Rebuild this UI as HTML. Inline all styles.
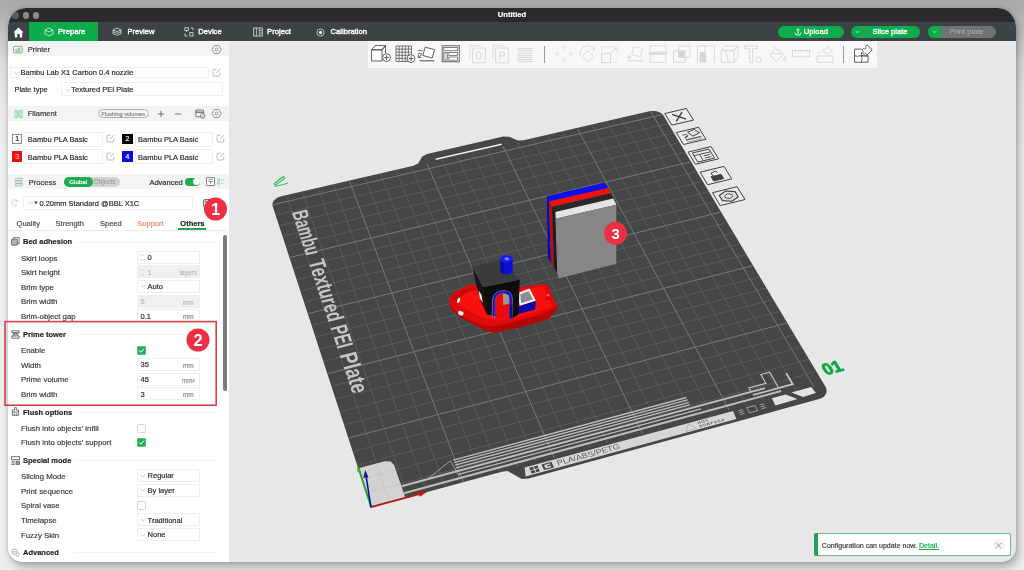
<!DOCTYPE html>
<html><head><meta charset="utf-8"><title>Untitled</title>
<style>
html,body{margin:0;padding:0;}
body{width:1024px;height:570px;overflow:hidden;position:relative;font-family:"Liberation Sans",sans-serif;
background:linear-gradient(180deg,#a6a9a6 0px,#abadab 10px,#c2c3c2 32px,#dcdcdc 62px,#e9e9e9 100px,#eeeeee 150px,#eeeeee 570px);}
#win{position:absolute;left:8px;top:8px;width:1007.5px;height:553.5px;border-radius:18px 18px 15px 15px / 20px 20px 15px 15px;overflow:hidden;background:#e7e7e7;will-change:transform;
}
#shadow{position:absolute;left:8px;top:8px;width:1007.5px;height:553.5px;border-radius:18px 18px 15px 15px / 20px 20px 15px 15px;box-shadow:3px 6px 10px 0px rgba(0,0,0,0.26),0 0 4px rgba(0,0,0,0.18);}
#in{position:absolute;left:-8px;top:-8px;width:1024px;height:570px;}
.t{position:absolute;white-space:nowrap;line-height:10px;height:10px;-webkit-text-stroke:0.18px currentColor;}
.b{position:absolute;box-sizing:border-box;}
.i{position:absolute;overflow:visible;}
</style></head><body>
<div id="shadow"></div>
<div id="win"><div id="in">
<svg class="i" style="left:0;top:0" width="1024" height="570" viewBox="0 0 1024 570"><polygon points="370.9,507.3 501.8,471.8 507.6,471.1 521.9,479.0 528.7,478.4 819.1,399.0 822.0,397.9 824.3,396.2 825.9,394.1 826.6,391.7 826.5,389.3 825.5,386.8 663.3,115.3 661.9,113.7 660.0,112.4 657.6,111.5 654.9,110.9 652.0,110.9 649.3,111.2 523.6,140.3 517.9,140.6 509.3,136.7 503.4,136.5 427.1,154.1 422.2,156.5 418.4,163.3 413.5,165.7 281.4,196.2 278.6,197.1 276.2,198.5 274.2,200.1 273.0,202.0 272.4,204.0 272.6,205.9" fill="#444746"/>
<path d="M389.6 502.2 L286.5 196.1 M367.2 492.8 L815.6 371.9 M408.2 497.2 L302.4 192.5 M362.6 478.8 L808.2 359.5 M426.7 492.1 L318.2 188.8 M358.1 465.0 L800.8 347.2 M445.2 487.1 L333.9 185.2 M353.6 451.3 L793.6 335.1 M481.8 477.2 L365.2 178.0 M344.9 424.7 L779.4 311.5 M500.0 472.3 L380.7 174.4 M340.7 411.6 L772.5 299.8 M518.1 467.3 L396.2 170.8 M336.5 398.7 L765.6 288.4 M536.1 462.5 L411.6 167.2 M332.3 386.1 L758.8 277.1 M571.9 452.7 L442.3 160.1 M324.2 361.2 L745.6 254.9 M589.7 447.9 L457.6 156.6 M320.2 349.0 L739.1 244.1 M607.4 443.1 L472.8 153.1 M316.3 337.0 L732.6 233.3 M625.0 438.3 L487.9 149.6 M312.4 325.2 L726.3 222.8 M660.1 428.8 L518.0 142.6 M304.9 302.0 L713.9 202.0 M677.5 424.1 L533.0 139.2 M301.1 290.6 L707.8 191.8 M694.8 419.4 L547.9 135.7 M297.5 279.4 L701.7 181.7 M712.0 414.7 L562.8 132.3 M293.9 268.3 L695.8 171.8 M746.3 405.4 L592.4 125.4 M286.8 246.5 L684.1 152.3 M763.3 400.8 L607.1 122.0 M283.3 235.9 L678.4 142.7 M780.3 396.2 L621.7 118.7 M279.8 225.4 L672.7 133.2 M797.2 391.6 L636.3 115.3 M276.4 215.0 L667.1 123.9" stroke="#5d6060" stroke-width="0.8" fill="none"/>
<path d="M463.5 482.2 L349.6 181.6 M349.3 437.9 L786.5 323.2 M554.1 457.6 L427.0 163.7 M328.2 373.5 L752.2 265.9 M642.6 433.5 L503.0 146.1 M308.6 313.5 L720.0 212.3 M729.2 410.0 L577.6 128.9 M290.3 257.3 L689.9 162.0 M814.0 387.0 L650.8 111.9 M273.1 204.7 L661.6 114.7" stroke="#767979" stroke-width="1.0" fill="none"/>
<polygon points="371.7,506.1 405.1,497.1 394.1,465.1 390.8,461.5 384.7,461.2 359.3,467.9" fill="#d2d2d2" />
<path d="M389.3 501.4 L376.5 463.3 M367.4 492.8 L400.5 483.8 M362.8 478.7 L395.7 469.9" stroke="#bdbdbd" stroke-width="0.5" fill="none"/>
<path d="M403.8 493.3 L781.2 391.0" stroke="#bcbcbc" stroke-width="2.00" fill="none"/>
<path d="M401.4 486.2 L765.0 388.1" stroke="#bcbcbc" stroke-width="2.00" fill="none"/>
<path d="M458.6 474.4 L701.1 408.9" stroke="#bcbcbc" stroke-width="1.40" fill="none"/>
<path d="M456.1 467.8 L690.1 404.7" stroke="#bcbcbc" stroke-width="1.35" fill="none"/>
<path d="M455.1 465.2 L688.9 402.3" stroke="#bcbcbc" stroke-width="1.35" fill="none"/>
<path d="M454.1 462.6 L687.6 399.8" stroke="#bcbcbc" stroke-width="1.35" fill="none"/>
<path d="M453.2 460.1 L686.4 397.5" stroke="#bcbcbc" stroke-width="1.35" fill="none"/>
<path d="M428.0 478.7 L450.4 460.7 L459.3 476.4" stroke="#c4c4c4" stroke-width="0.7" fill="none" stroke-linejoin="miter"/>
<path d="M751.2 391.9 L748.9 387.9 L765.9 383.3 L760.9 374.5 L769.6 372.1 L778.4 387.5" stroke="#c4c4c4" stroke-width="1.2" fill="none" stroke-linejoin="miter"/>
<path d="M786.2 373.2 L792.7 384.2 L752.9 395.0" stroke="#c4c4c4" stroke-width="1.8" fill="none" stroke-linejoin="miter"/>
<polygon points="524.6,467.6 733.0,410.9 736.4,418.9 525.6,476.4" fill="#d6d6d6" />
<polygon points="529.3,467.7 537.4,465.5 539.8,471.3 531.7,473.5" fill="#3f4242" />
<polygon points="532.9,466.7 534.0,466.4 536.4,472.2 535.3,472.5" fill="#d6d6d6" />
<polygon points="530.3,470.2 538.4,468.0 538.8,468.8 530.7,471.0" fill="#d6d6d6" />
<polygon points="541.5,464.4 551.4,461.7 553.9,467.4 544.0,470.1" fill="#3f4242" />
<polygon points="544.0,464.9 549.9,463.3 551.4,466.9 545.5,468.5" fill="#d6d6d6" />
<polygon points="547.0,465.3 550.4,464.4 550.9,465.5 547.4,466.4" fill="#3f4242" />
<text transform="matrix(1.7972 -0.4899 0.5959 1.3775 558.10 465.53)" font-family="Liberation Sans, sans-serif" font-weight="normal" font-size="5.0" fill="#5c5f5f" letter-spacing="0" textLength="34.8" lengthAdjust="spacingAndGlyphs">PLA/ABS/PETG</text>
<path d="M686.1 431.3 L688.5 423.9 L696.8 428.3 L686.1 431.3" stroke="#8a8a8a" stroke-width="0.4" fill="none" stroke-linejoin="miter"/>
<text transform="matrix(1.7319 -0.4714 0.6849 1.3215 698.26 424.15)" font-family="Liberation Sans, sans-serif" font-weight="bold" font-size="2.4" fill="#55585a" letter-spacing="0.5">HOT</text>
<text transform="matrix(1.7347 -0.4730 0.6873 1.3263 699.97 427.46)" font-family="Liberation Sans, sans-serif" font-weight="bold" font-size="2.4" fill="#55585a" letter-spacing="0.5">SURFACE</text>
<path d="M746.6 407.7 L754.8 405.5 L757.7 410.7 L749.5 412.9 L746.6 407.7" stroke="#c4c4c4" stroke-width="0.7" fill="none" stroke-linejoin="miter"/>
<path d="M738.1 410.9 L742.6 409.7" stroke="#c4c4c4" stroke-width="0.70" fill="none"/>
<path d="M739.1 412.7 L743.6 411.5" stroke="#c4c4c4" stroke-width="0.70" fill="none"/>
<path d="M740.1 414.6 L744.6 413.3" stroke="#c4c4c4" stroke-width="0.70" fill="none"/>
<path d="M759.6 405.0 L764.1 403.8" stroke="#c4c4c4" stroke-width="0.70" fill="none"/>
<path d="M760.7 406.9 L765.1 405.7" stroke="#c4c4c4" stroke-width="0.70" fill="none"/>
<path d="M761.7 408.7 L766.1 407.5" stroke="#c4c4c4" stroke-width="0.70" fill="none"/>
<polygon points="771.8,398.2 785.5,394.4 797.5,398.9 775.4,405.5" fill="#e2e2e2" />
<polygon points="791.4,392.4 811.2,387.0 815.9,393.0 803.0,397.0" fill="#e2e2e2" />
<path d="M435.7 159.2 L501.7 144.2" stroke="#ececec" stroke-width="1.50" fill="none"/>
<text transform="matrix(0.3555 1.0567 -1.6223 0.3830 291.64 212.32)" font-family="Liberation Sans, sans-serif" font-weight="bold" font-size="13.3" textLength="41.5" lengthAdjust="spacingAndGlyphs" fill="#c6c6c6">Bambu</text>
<text transform="matrix(0.3808 1.1317 -1.6749 0.4080 308.20 261.53)" font-family="Liberation Sans, sans-serif" font-weight="bold" font-size="13.3" textLength="54.2" lengthAdjust="spacingAndGlyphs" fill="#c6c6c6">Textured</text>
<text transform="matrix(0.4018 1.1941 -1.7172 0.4288 330.31 327.26)" font-family="Liberation Sans, sans-serif" font-weight="bold" font-size="13.3" textLength="18.5" lengthAdjust="spacingAndGlyphs" fill="#c6c6c6">PEI</text>
<text transform="matrix(0.4185 1.2438 -1.7500 0.4454 339.59 354.82)" font-family="Liberation Sans, sans-serif" font-weight="bold" font-size="13.3" textLength="32.0" lengthAdjust="spacingAndGlyphs" fill="#c6c6c6">Plate</text>
<polygon points="664.8,113.5 686.4,108.5 693.5,120.1 671.8,125.1" fill="#ebebeb" stroke="#3e4141" stroke-width="1" stroke-linejoin="round"/>
<path d="M672.1 114.4 L686.2 119.1" stroke="#3e4141" stroke-width="1.40" fill="none"/>
<path d="M682.0 112.1 L676.3 121.4" stroke="#3e4141" stroke-width="1.40" fill="none"/>
<polygon points="676.3,132.6 698.6,127.3 705.9,139.2 683.5,144.5" fill="#ebebeb" stroke="#3e4141" stroke-width="1" stroke-linejoin="round"/>
<polygon points="687.6,132.3 694.3,129.4 699.4,132.8 692.8,136.1" fill="#ebebeb" stroke="#3e4141" stroke-width="1.0" stroke-linejoin="round"/>
<path d="M685.9 140.1 L701.2 136.5" stroke="#6a6d6d" stroke-width="1.50" fill="none"/>
<path d="M687.2 142.2 L702.5 138.6" stroke="#8a8d8d" stroke-width="0.80" fill="none"/>
<path d="M682.0 135.3 L686.9 134.1" stroke="#3e4141" stroke-width="0.80" fill="none"/>
<path d="M684.8 138.2 L688.1 135.2" stroke="#3e4141" stroke-width="1.20" fill="none"/>
<polygon points="688.1,152.1 711.1,146.6 718.6,158.8 695.4,164.3" fill="#ebebeb" stroke="#3e4141" stroke-width="1" stroke-linejoin="round"/>
<polygon points="692.3,153.0 708.9,149.1 714.5,158.1 697.8,162.1" fill="none" stroke="#3e4141" stroke-width="1.0" stroke-linejoin="round"/>
<path d="M693.9 155.7 L710.6 151.8" stroke="#3e4141" stroke-width="0.90" fill="none"/>
<path d="M699.5 154.4 L703.4 160.8" stroke="#3e4141" stroke-width="0.90" fill="none"/>
<path d="M703.6 155.9 L710.1 154.4" stroke="#3e4141" stroke-width="0.90" fill="none"/>
<path d="M704.9 158.1 L711.4 156.6" stroke="#3e4141" stroke-width="0.90" fill="none"/>
<polygon points="700.1,172.2 724.0,166.4 731.7,178.9 707.7,184.7" fill="#ebebeb" stroke="#3e4141" stroke-width="1" stroke-linejoin="round"/>
<polygon points="711.1,176.7 721.1,174.3 723.8,178.6 713.7,181.1" fill="#3e4141" stroke="#3e4141" stroke-width="0.9" stroke-linejoin="round"/>
<path d="M713.0 176.2 L711.0 173.0 L715.8 171.0 L717.4 172.6" stroke="#3e4141" stroke-width="1.0" fill="none" stroke-linejoin="miter"/>
<polygon points="712.5,192.7 737.1,186.7 745.0,199.5 720.2,205.6" fill="#ebebeb" stroke="#3e4141" stroke-width="1" stroke-linejoin="round"/>
<polygon points="725.6,191.0 735.1,191.6 738.2,196.8 731.9,201.3 722.4,200.6 719.3,195.5" fill="#dcdcdc" stroke="#3e4141" stroke-width="1.1" stroke-linejoin="round"/>
<polygon points="727.4,193.9 731.6,194.3 732.8,196.3 730.1,198.3 725.9,198.0 724.6,195.9" fill="#ebebeb" stroke="#3e4141" stroke-width="0.9" stroke-linejoin="round"/>
<path d="M370.9 507.3 L420.2 493.9" stroke="#c81212" stroke-width="1.6"/>
<polygon points="426.7,492.1 417.7,491.8 419.9,496.8" fill="#c81212" />
<path d="M370.9 507.3 L359.2 471.4" stroke="#22b52a" stroke-width="1.3"/>
<polygon points="357.3,464.3 357.5,472.4 361.0,471.2" fill="#22b52a" />
<path d="M370.9 507.3 L366.3 477.3" stroke="#13139a" stroke-width="1.6"/>
<polygon points="365.3,469.9 363.3,477.7 368.5,477.5" fill="#13139a" />
<polygon points="546.8,196.3 548.9,201.6 551.1,262.6 547.9,257.4" fill="#0a0ab8" />
<polygon points="548.9,201.6 552.1,206.8 554.2,267.9 551.1,262.6" fill="#b80d0d" />
<polygon points="552.1,206.8 555.3,212.1 557.4,273.2 554.2,267.9" fill="#1c1c1c" />
<polygon points="555.3,212.1 556.3,218.4 558.4,278.4 557.4,273.2" fill="#9a9a9a" />
<polygon points="546.8,196.3 604.7,182.6 607.9,187.9 548.9,201.6" fill="#0d0df0" />
<polygon points="548.9,201.6 607.9,187.9 611.1,193.2 552.1,206.8" fill="#f01010" />
<polygon points="552.1,206.8 611.1,193.2 613.2,198.4 555.3,212.1" fill="#2a2a2a" />
<polygon points="555.3,212.1 613.2,198.4 616.3,204.7 556.3,218.4" fill="#e4e4e4" />
<polygon points="556.3,218.4 616.3,204.7 616.3,263.7 558.4,278.4" fill="#868686" />
<path d="M449.2 300 C450.5 295 454 292.5 458.7 289.8 C463 287.3 467.5 285.6 472 284.6 L518.4 287.2 L544.6 284 Q547.2 284 548.4 286.8 L557.1 305.8 Q557.8 308 555.9 310.2 L549.1 318.5 C538 322.6 524 326.4 512.3 329 L500 331.6 Q495.5 333.2 491 332.2 C487 331.2 484 329.8 480.8 328 C472 323.6 463.5 319.6 457.3 314.8 C452.5 311 448.4 305.4 449.2 300Z" fill="#e00a0a" />
<path d="M449.6 303 C454 311 462 316.6 470 320.2 C478 323.8 486 326.4 493 326 C505 325 530 318 549 311 L557.4 306.6 Q557.8 308.4 555.9 310.2 L549.1 318.5 C538 322.6 524 326.4 512.3 329 L500 331.6 Q495.5 333.2 491 332.2 C487 331.2 484 329.8 480.8 328 C472 323.6 463.5 319.6 457.3 314.8 C453 311.4 449.4 307 449.6 303Z" fill="#b60707" />
<path d="M456.5 298.5 C460 293 466 289.6 474 288.2 L518.4 289.6 L543.2 286.6 L547.6 296.6 L551.6 306.6 C540 311.6 516 318.4 497 320.2 C486 319.8 462 311 456.5 298.5Z" fill="#fb1010" />
<path d="M451.6 298.8 C455 293.6 463 288.8 473.6 286.4 L476.4 289.6 C468 291.4 460.6 295.6 457.2 301.2Z" fill="#c60a0a" />
<ellipse cx="460.8" cy="313.2" rx="3.2" ry="2.4" fill="#f4f4f4" stroke="#a40000" stroke-width="0.5" transform="rotate(25 460.8 313.2)"/>
<ellipse cx="458.6" cy="300.4" rx="1.4" ry="2.7" fill="#f4f4f4" transform="rotate(20 458.6 300.4)"/>
<polygon points="517.9,292.9 529.5,288.4 535.9,300.7 519.7,306.0" fill="#f6f6f6" />
<polygon points="520.3,294.2 528.6,291.0 532.9,299.5 521.1,303.3" fill="#8c8c8c" />
<polygon points="518.4,306.0 519.7,306.0 535.9,300.7 535.1,309.6 518.4,314.0" fill="#0a0aa6" />
<polygon points="545.0,294.6 549.4,294.1 549.4,299.5 545.2,300.2" fill="#d60909" />
<ellipse cx="547.4" cy="295" rx="2.2" ry="1.6" fill="#ff2a2a"/>
<ellipse cx="548.4" cy="295.2" rx="0.9" ry="0.8" fill="#ff9a9a"/>
<polygon points="472.3,266.7 483.0,287.2 486.8,314.5 481.0,301.5 476.5,286.0" fill="#151515" />
<polygon points="478.6,290.5 481.6,295.0 482.6,303.0 479.8,298.0" fill="#ececec" />
<polygon points="483.0,287.2 519.7,279.6 518.6,314.5 512.0,318.2 486.8,314.5" fill="#0d0d0d" />
<path d="M492.1 316.4 L492.6 300.3 C492.9 292.4 500.0 290.0 505.6 290.8 C511.1 291.6 512.4 295.6 512.4 300.3 L512.0 318.0 L509.5 318.9 L509.5 299.5 C509.2 295.2 506.4 293.2 502.4 293.2 C496.9 293.7 495.3 297.1 495.3 301.9 L495.0 317.7Z" fill="#1010c8" stroke="#e8e8f8" stroke-width="0.4"/>
<path d="M495.3 317.7 L495.3 301.9 C495.3 297.1 496.9 293.7 502.4 293.2 C506.4 293.2 509.2 295.2 509.5 299.5 L509.5 318.9Z" fill="#e80c0c" />
<polygon points="502.9,293.2 508.9,295.2 508.9,303.8 503.2,305.0" fill="#9a9a9a" />
<polygon points="509.5,305.0 512.4,303.8 512.0,318.0 509.5,318.9" fill="#0b0ba0" />
<polygon points="472.3,266.7 500.5,260.3 519.7,279.6 483.0,287.2" fill="#3a3b3b" />
<path d="M500.4 259 V272.6 Q506.5 276.6 512.7 272.6 V259 Z" fill="#0e0ed2"/>
<path d="M500.4 259 V272.6 Q502 273.8 503.6 274.2 V261 Z" fill="#0a0aa2"/>
<ellipse cx="506.5" cy="258.9" rx="6.2" ry="3.9" fill="#1c1cf2"/>
<ellipse cx="506.9" cy="258.8" rx="2.2" ry="1.5" fill="#8c8cdc"/>
<circle cx="615.5" cy="233.3" r="11.5" fill="#ef2f43"/><text x="615.5" y="238.63" text-anchor="middle" font-family="Liberation Sans, sans-serif" font-weight="bold" font-size="14.8" fill="#fff">3</text>
<text transform="matrix(1.427 -0.385 0.758 1.251 826.0 375.2)" font-family="Liberation Sans, sans-serif" font-weight="bold" font-size="11.8" fill="#10a84a" stroke="#10a84a" stroke-width="0.6">01</text>
<g><path d="M274.6 183.4 L282.2 177.2 Q283.6 176.2 284.3 177.3 Q284.9 178.4 283.6 179.4 L276 184.6 Q274 185.2 274.6 183.4 Z" fill="#c8f0d8" stroke="#18b85c" stroke-width="1.1"/><path d="M274.2 186.4 Q281 185.6 288.2 183" fill="none" stroke="#18b85c" stroke-width="0.9"/></g></svg>
<div class="b" style="left:368px;top:41.3px;width:508.6px;height:26.6px;background:#f8f8f8"></div>
<svg class="i" style="left:370.0px;top:44.4px" width="22" height="20" viewBox="0 0 22 20"><path d="M1.5 5.8 L5 1.6 H15.5 L12 5.8 Z M1.5 5.8 H12 V17 H1.5 Z M12 5.8 L15.5 1.6 V9" fill="#fff" stroke="#505050" stroke-width="0.9" stroke-linejoin="round"/><circle cx="16.6" cy="13.6" r="3.9" fill="#fff" stroke="#505050" stroke-width="0.9"/><path d="M16.6 11.2 V16 M14.2 13.6 H19" stroke="#505050" stroke-width="0.9"/></svg>
<svg class="i" style="left:393.5px;top:44.4px" width="22" height="20" viewBox="0 0 22 20"><path d="M2.0 2 V17.5 M2 2.0 H17.5 M5.1 2 V17.5 M2 5.1 H17.5 M8.2 2 V17.5 M2 8.2 H17.5 M11.3 2 V17.5 M2 11.3 H17.5 M14.4 2 V17.5 M2 14.4 H17.5 M17.5 2 V17.5 M2 17.5 H17.5 " stroke="#505050" stroke-width="0.75" fill="none"/><circle cx="17" cy="14.6" r="3.9" fill="#fff" stroke="#505050" stroke-width="0.9"/><path d="M17 12.2 V17 M14.6 14.6 H19.4" stroke="#505050" stroke-width="0.9"/></svg>
<svg class="i" style="left:416.0px;top:44.4px" width="22" height="20" viewBox="0 0 22 20"><path d="M9.2 3.2 L18.6 5.6 L16.2 14 L6.8 11.4 Z" fill="#fff" stroke="#505050" stroke-width="0.9" stroke-linejoin="round"/><path d="M2 6.6 H6.4 M2 9.4 H5.6 M2.4 13.4 L6 10.2 M2.4 13.4 V10.6 M2.4 13.4 H5.2" stroke="#505050" stroke-width="0.8" fill="none"/><path d="M3.6 16.8 H18.4" stroke="#7a7a7a" stroke-width="1.4"/></svg>
<svg class="i" style="left:439.5px;top:44.4px" width="22" height="20" viewBox="0 0 22 20"><rect x="2.2" y="1.8" width="17" height="16" fill="#fff" stroke="#505050" stroke-width="0.9"/><rect x="3.8" y="3.4" width="13.8" height="3.4" fill="none" stroke="#505050" stroke-width="0.7"/><rect x="3.8" y="8.4" width="3.4" height="7.8" fill="#ddd" stroke="#505050" stroke-width="0.7"/><rect x="8.8" y="8.4" width="8.8" height="3" fill="none" stroke="#505050" stroke-width="0.7"/><rect x="8.8" y="13" width="8.8" height="3.2" fill="none" stroke="#505050" stroke-width="0.7"/></svg>
<svg class="i" style="left:467.0px;top:44.4px" width="22" height="20" viewBox="0 0 22 20"><path d="M3 15 V1.6 H13 M5.6 4 H18.4 V18.8 H5.6 Z" fill="none" stroke="#d6d6d6" stroke-width="0.9"/><rect x="9.4" y="8" width="4.6" height="7" rx="1.6" fill="none" stroke="#d6d6d6" stroke-width="1"/></svg>
<svg class="i" style="left:489.8px;top:44.4px" width="22" height="20" viewBox="0 0 22 20"><path d="M3 15 V1.6 H13 M5.6 4 H18.4 V18.8 H5.6 Z" fill="none" stroke="#d6d6d6" stroke-width="0.9"/><path d="M9.8 15.4 V8 H12.6 Q14.6 8 14.6 10 Q14.6 12 12.6 12 H9.8" fill="none" stroke="#d6d6d6" stroke-width="1"/></svg>
<svg class="i" style="left:513.5px;top:44.4px" width="22" height="20" viewBox="0 0 22 20"><path d="M3.5 4.6 H18.5 M3.5 6.8 H18.5 M3.5 9.0 H18.5 M3.5 11.2 H18.5 M3.5 13.4 H18.5 M3.5 15.6 H18.5 M3.5 17.8 H18.5 " stroke="#d6d6d6" stroke-width="1.1"/></svg>
<div class="b" style="left:544.3px;top:46px;width:0.9px;height:16.6px;background:#9c9c9c"></div>
<svg class="i" style="left:552.5px;top:44.4px" width="22" height="20" viewBox="0 0 22 20"><path d="M11 1.6 L13 4 H9 Z M11 18 L13 15.6 H9 Z M2 9.8 L4.4 7.8 V11.8 Z M20 9.8 L17.6 7.8 V11.8 Z M11 4 V7 M11 12.6 V15.6 M4.4 9.8 H7.4 M14.6 9.8 H17.6" fill="none" stroke="#d6d6d6" stroke-width="0.8" stroke-dasharray="1.2 0.8"/></svg>
<svg class="i" style="left:576.7px;top:44.4px" width="22" height="20" viewBox="0 0 22 20"><path d="M3.4 12 A7.6 7.6 0 0 1 17 5.4 M17.4 2.6 V5.8 H14.2" fill="none" stroke="#d6d6d6" stroke-width="0.9"/><path d="M10.6 6.6 L16.4 12.4 L10.6 18.2 L4.8 12.4 Z" fill="none" stroke="#d6d6d6" stroke-width="0.9"/></svg>
<svg class="i" style="left:599.0px;top:44.4px" width="22" height="20" viewBox="0 0 22 20"><rect x="2.6" y="2.6" width="16" height="16" fill="none" stroke="#d6d6d6" stroke-width="0.7" stroke-dasharray="1.2 0.9"/><rect x="2.6" y="9.6" width="9" height="9" fill="none" stroke="#d6d6d6" stroke-width="0.9"/><path d="M12.6 8.6 L17 4.2 M14.4 4 H17.2 V6.8" fill="none" stroke="#d6d6d6" stroke-width="0.9"/></svg>
<svg class="i" style="left:624.5px;top:44.4px" width="22" height="20" viewBox="0 0 22 20"><path d="M8.6 2.6 L17.4 4.4 L15.6 12.6 L6.8 10.6 Z" fill="none" stroke="#d6d6d6" stroke-width="0.9"/><path d="M3.2 11.4 L6 13.6 L3.6 15 Z M3.4 16.8 H18.2" fill="none" stroke="#d6d6d6" stroke-width="1"/></svg>
<svg class="i" style="left:647.0px;top:44.4px" width="22" height="20" viewBox="0 0 22 20"><rect x="3" y="1.8" width="16" height="6.4" fill="none" stroke="#d6d6d6" stroke-width="0.9"/><rect x="3" y="10.4" width="16" height="8" fill="none" stroke="#d6d6d6" stroke-width="0.9"/><path d="M1.6 9.3 H20.4" stroke="#d6d6d6" stroke-width="0.9"/></svg>
<svg class="i" style="left:671.0px;top:44.4px" width="22" height="20" viewBox="0 0 22 20"><rect x="7.6" y="2" width="11.4" height="11.4" fill="none" stroke="#d6d6d6" stroke-width="0.9"/><rect x="2.6" y="6.8" width="11.4" height="11.4" fill="none" stroke="#d6d6d6" stroke-width="0.9"/><rect x="7.6" y="6.8" width="6.4" height="6.6" fill="#d6d6d6"/></svg>
<svg class="i" style="left:694.5px;top:44.4px" width="22" height="20" viewBox="0 0 22 20"><path d="M2.4 1.8 H19.4 V18.4 M2.4 1.8 V18.4 M10 1.8 V8" fill="none" stroke="#d6d6d6" stroke-width="0.9"/><rect x="4.6" y="8" width="6.4" height="10.4" fill="#d6d6d6"/></svg>
<svg class="i" style="left:718.5px;top:44.4px" width="22" height="20" viewBox="0 0 22 20"><path d="M2.4 6.4 L6.4 2 H19 L15 6.4 Z M2.4 6.4 H15 V18.4 H2.4 Z M15 6.4 L19 2 V14 L15 18.4 M6.4 6.4 L9.6 18.4" fill="none" stroke="#d6d6d6" stroke-width="0.9" stroke-linejoin="round"/></svg>
<svg class="i" style="left:742.0px;top:44.4px" width="22" height="20" viewBox="0 0 22 20"><path d="M2.6 2 H15.6 V4.6 H10.6 V18.4 H7.6 V4.6 H2.6 Z" fill="none" stroke="#d6d6d6" stroke-width="0.9"/><rect x="14.4" y="13.2" width="4.4" height="5.2" rx="0.8" fill="none" stroke="#d6d6d6" stroke-width="0.8"/></svg>
<svg class="i" style="left:766.8px;top:44.4px" width="22" height="20" viewBox="0 0 22 20"><path d="M6.2 2 L10.8 6.6 M8.6 4.4 L2.6 10.6 L9.4 17.6 L16.4 10.6 L10.8 5 M3.6 9.6 H15.4" fill="none" stroke="#d6d6d6" stroke-width="0.9"/><path d="M17.6 12.4 Q20.2 16 17.6 17.8 Q15 16 17.6 12.4 Z" fill="none" stroke="#d6d6d6" stroke-width="0.8"/></svg>
<svg class="i" style="left:789.7px;top:44.4px" width="22" height="20" viewBox="0 0 22 20"><rect x="2.4" y="6.4" width="17.2" height="6.4" fill="none" stroke="#d6d6d6" stroke-width="0.9"/><path d="M5.4 6.4 V9 M8.4 6.4 V8.2 M11.4 6.4 V9 M14.4 6.4 V8.2 M17 6.4 V9" stroke="#d6d6d6" stroke-width="0.8"/></svg>
<svg class="i" style="left:814.2px;top:44.4px" width="22" height="20" viewBox="0 0 22 20"><rect x="3" y="12" width="16" height="6.4" fill="none" stroke="#d6d6d6" stroke-width="0.9"/><path d="M8.4 6.6 L13.4 3 L18.4 6.8 L13.6 10.2 Z M3 9.8 L5.2 7.2 L7.4 9.8" fill="none" stroke="#d6d6d6" stroke-width="0.9"/></svg>
<div class="b" style="left:843.3px;top:46px;width:0.9px;height:16.6px;background:#9c9c9c"></div>
<svg class="i" style="left:851.7px;top:44.4px" width="22" height="20" viewBox="0 0 22 20"><path d="M9.6 5.1 H2.5 V18.2 H16.1 V11.9 H9.6" fill="#fff" stroke="#505050" stroke-width="0.9" stroke-linejoin="round"/><path d="M2.5 11.9 H4.2 Q5.4 13.6 6.8 11.9 H16.1 M9.6 8 V13.6 Q11.2 14.8 9.6 16.2 V18.2" fill="none" stroke="#505050" stroke-width="0.9"/><path d="M15.1 0.9 L20.2 5.9 L15.1 10.9 L13.4 9.3 Q12.2 10.6 11 9.6 Q10 8.4 11.4 7.4 L10 5.9 L11.6 4.4 Q12.6 5.6 13.8 4.6 Q14.6 3.6 13.6 2.4 Z" fill="#fff" stroke="#505050" stroke-width="0.9" stroke-linejoin="round"/></svg>
<div class="b" style="left:8px;top:41px;width:220.5px;height:521px;background:#fff"></div>
<div class="b" style="left:8px;top:41px;width:220.5px;height:15.4px;background:#f4f4f4"></div>
<svg class="i" style="left:12.5px;top:44.5px" width="10" height="9" viewBox="0 0 10 9"><rect x="0.6" y="1.3" width="8.6" height="6.6" rx="1" fill="none" stroke="#8d9a92" stroke-width="0.9"/><path d="M2.6 6.5 V4.5 H5 V3 H7.2 V6.5 Z" fill="#9fd9b4" stroke="#6bbf8b" stroke-width="0.5"/></svg>
<div class="t" style="left:27.7px;top:45.20px;font-size:7.6px;color:#333;font-weight:normal;">Printer</div>
<svg class="i" style="left:211.0px;top:43.9px" width="11" height="11" viewBox="0 0 11 11"><path d="M0.9 5.5 L3.2 1.5 H7.8 L10.1 5.5 L7.8 9.5 H3.2 Z" fill="none" stroke="#858585" stroke-width="0.8" stroke-linejoin="round"/><circle cx="5.5" cy="5.5" r="1.5" fill="none" stroke="#858585" stroke-width="0.8"/></svg>
<div class="b" style="left:9.5px;top:66.5px;width:199.5px;height:11.5px;border:0.6px solid #efefef;background:#fff"></div>
<svg class="i" style="left:13px;top:70.5px" width="6" height="4" viewBox="0 0 6 4"><path d="M0.5 0.7 L3 3.2 L5.5 0.7" fill="none" stroke="#c4c4c4" stroke-width="0.8"/></svg>
<div class="t" style="left:20.6px;top:68.20px;font-size:7.5px;color:#2a2a2a;font-weight:normal;">Bambu Lab X1 Carbon 0.4 nozzle</div>
<svg class="i" style="left:211.5px;top:67.8px" width="9" height="9" viewBox="0 0 9 9"><path d="M4.6 1.2 H2 Q1 1.2 1 2.2 V7 Q1 8 2 8 H6.8 Q7.8 8 7.8 7 V4.6" fill="none" stroke="#b4b4b4" stroke-width="0.9"/><path d="M4.4 4.8 L8 1.1" stroke="#b4b4b4" stroke-width="1"/></svg>
<div class="t" style="left:14.4px;top:85.20px;font-size:7.5px;color:#2a2a2a;font-weight:normal;">Plate type</div>
<div class="b" style="left:60.5px;top:81.8px;width:162px;height:14.4px;border:0.6px solid #efefef;background:#fff"></div>
<svg class="i" style="left:64.5px;top:87.6px" width="6" height="4" viewBox="0 0 6 4"><path d="M0.5 0.7 L3 3.2 L5.5 0.7" fill="none" stroke="#c4c4c4" stroke-width="0.8"/></svg>
<div class="t" style="left:71.3px;top:85.40px;font-size:7.5px;color:#2a2a2a;font-weight:normal;">Textured PEI Plate</div>
<div class="b" style="left:8px;top:105.6px;width:220.5px;height:15.2px;background:#f4f4f4"></div>
<svg class="i" style="left:13.5px;top:108.5px" width="9" height="10" viewBox="0 0 9 10"><path d="M0.8 1 H3 V9 H0.8 Z M6 1 H8.2 V9 H6 Z" fill="#cdeed9" stroke="#8ccfa6" stroke-width="0.7"/><path d="M3 2.2 H6 M3 7.8 H6" stroke="#8ccfa6" stroke-width="0.7"/><rect x="3.4" y="2.6" width="2.2" height="4.8" fill="#a5dcb9"/></svg>
<div class="t" style="left:27.7px;top:109.10px;font-size:7.6px;color:#333;font-weight:normal;">Filament</div>
<div class="b" style="left:97.5px;top:108.6px;width:51px;height:9.4px;border:0.7px solid #b0b0b0;border-radius:5px;background:#f4f4f4"></div>
<div class="t" style="left:101.5px;top:108.90px;font-size:5.6px;color:#8a8a8a;font-weight:normal;">Flushing volumes</div>
<svg class="i" style="left:157px;top:109.5px" width="8" height="8" viewBox="0 0 8 8"><path d="M4 0.8 V7.2 M0.8 4 H7.2" stroke="#555" stroke-width="0.8"/></svg>
<svg class="i" style="left:173.5px;top:109.5px" width="8" height="8" viewBox="0 0 8 8"><path d="M0.8 4 H7.2" stroke="#555" stroke-width="0.8"/></svg>
<svg class="i" style="left:194.5px;top:108.5px" width="11" height="10" viewBox="0 0 11 10"><rect x="0.8" y="1" width="7.8" height="6.8" rx="0.8" fill="none" stroke="#666" stroke-width="0.9"/><path d="M0.8 3.2 H8.6" stroke="#666" stroke-width="1.2"/><circle cx="7.6" cy="6.9" r="2.3" fill="#f4f4f4" stroke="#666" stroke-width="0.8"/><path d="M6.6 6.9 L7.4 7.7 L8.7 6.2" fill="none" stroke="#666" stroke-width="0.6"/></svg>
<svg class="i" style="left:211.0px;top:107.9px" width="11" height="11" viewBox="0 0 11 11"><path d="M0.9 5.5 L3.2 1.5 H7.8 L10.1 5.5 L7.8 9.5 H3.2 Z" fill="none" stroke="#858585" stroke-width="0.8" stroke-linejoin="round"/><circle cx="5.5" cy="5.5" r="1.5" fill="none" stroke="#858585" stroke-width="0.8"/></svg>
<div class="b" style="left:12.1px;top:133.5px;width:10.4px;height:10.4px;background:#fff;border:0.6px solid #909090;"></div><div class="t" style="left:12.1px;top:134.30px;font-size:6.9px;color:#222;font-weight:normal;width:10.4px;text-align:center;">1</div><div class="b" style="left:25px;top:131.6px;width:78px;height:15.2px;border:0.6px solid #efefef;background:#fff"></div><div class="t" style="left:27.8px;top:135.00px;font-size:7.5px;color:#2a2a2a;font-weight:normal;">Bambu PLA Basic</div><svg class="i" style="left:105.5px;top:134.39999999999998px" width="9" height="9" viewBox="0 0 9 9"><path d="M4.6 1.2 H2 Q1 1.2 1 2.2 V7 Q1 8 2 8 H6.8 Q7.8 8 7.8 7 V4.6" fill="none" stroke="#b4b4b4" stroke-width="0.9"/><path d="M4.4 4.8 L8 1.1" stroke="#b4b4b4" stroke-width="1"/></svg>
<div class="b" style="left:122.2px;top:133.5px;width:10.4px;height:10.4px;background:#000;"></div><div class="t" style="left:122.2px;top:134.30px;font-size:6.9px;color:#fff;font-weight:normal;width:10.4px;text-align:center;">2</div><div class="b" style="left:135.3px;top:131.6px;width:77.5px;height:15.2px;border:0.6px solid #efefef;background:#fff"></div><div class="t" style="left:138.10000000000002px;top:135.00px;font-size:7.5px;color:#2a2a2a;font-weight:normal;">Bambu PLA Basic</div><svg class="i" style="left:215.5px;top:134.39999999999998px" width="9" height="9" viewBox="0 0 9 9"><path d="M4.6 1.2 H2 Q1 1.2 1 2.2 V7 Q1 8 2 8 H6.8 Q7.8 8 7.8 7 V4.6" fill="none" stroke="#b4b4b4" stroke-width="0.9"/><path d="M4.4 4.8 L8 1.1" stroke="#b4b4b4" stroke-width="1"/></svg>
<div class="b" style="left:12.1px;top:151.3px;width:10.4px;height:10.4px;background:#ee1111;"></div><div class="t" style="left:12.1px;top:152.10px;font-size:6.9px;color:#ffb0b0;font-weight:normal;width:10.4px;text-align:center;">3</div><div class="b" style="left:25px;top:149.20000000000002px;width:78px;height:15.2px;border:0.6px solid #efefef;background:#fff"></div><div class="t" style="left:27.8px;top:152.60px;font-size:7.5px;color:#2a2a2a;font-weight:normal;">Bambu PLA Basic</div><svg class="i" style="left:105.5px;top:152.0px" width="9" height="9" viewBox="0 0 9 9"><path d="M4.6 1.2 H2 Q1 1.2 1 2.2 V7 Q1 8 2 8 H6.8 Q7.8 8 7.8 7 V4.6" fill="none" stroke="#b4b4b4" stroke-width="0.9"/><path d="M4.4 4.8 L8 1.1" stroke="#b4b4b4" stroke-width="1"/></svg>
<div class="b" style="left:122.2px;top:151.3px;width:10.4px;height:10.4px;background:#0c0ce0;"></div><div class="t" style="left:122.2px;top:152.10px;font-size:6.9px;color:#fff;font-weight:normal;width:10.4px;text-align:center;">4</div><div class="b" style="left:135.3px;top:149.20000000000002px;width:77.5px;height:15.2px;border:0.6px solid #efefef;background:#fff"></div><div class="t" style="left:138.10000000000002px;top:152.60px;font-size:7.5px;color:#2a2a2a;font-weight:normal;">Bambu PLA Basic</div><svg class="i" style="left:215.5px;top:152.0px" width="9" height="9" viewBox="0 0 9 9"><path d="M4.6 1.2 H2 Q1 1.2 1 2.2 V7 Q1 8 2 8 H6.8 Q7.8 8 7.8 7 V4.6" fill="none" stroke="#b4b4b4" stroke-width="0.9"/><path d="M4.4 4.8 L8 1.1" stroke="#b4b4b4" stroke-width="1"/></svg>
<div class="b" style="left:8px;top:174.4px;width:220.5px;height:15px;background:#f4f4f4"></div>
<svg class="i" style="left:13.5px;top:177px" width="10" height="10" viewBox="0 0 10 10"><path d="M2 1.2 H8.6 L7.6 3.6 H1 Z M2 3.9 H8.6 L7.6 6.3 H1 Z M2 6.6 H8.6 L7.6 9 H1 Z" fill="#dfeee6" stroke="#9aa8a0" stroke-width="0.6" stroke-linejoin="round"/></svg>
<div class="t" style="left:28.7px;top:177.50px;font-size:7.6px;color:#333;font-weight:normal;">Process</div>
<div class="b" style="left:63.7px;top:176.5px;width:56.5px;height:10.5px;background:#d2d2d2;border-radius:5.3px"></div>
<div class="b" style="left:63.7px;top:176.5px;width:29px;height:10.5px;background:#1eab53;border-radius:5.3px"></div>
<div class="t" style="left:63.7px;top:177.40px;font-size:6.2px;color:#fff;font-weight:normal;width:29px;text-align:center;">Global</div>
<div class="t" style="left:93.8px;top:177.40px;font-size:6.4px;color:#a2a2a2;font-weight:normal;">Objects</div>
<div class="t" style="left:149.4px;top:177.50px;font-size:7.5px;color:#2a2a2a;font-weight:normal;">Advanced</div>
<div class="b" style="left:184.9px;top:177.5px;width:15.4px;height:8.6px;background:#1eab53;border-radius:4.3px"></div>
<div class="b" style="left:192.6px;top:178.3px;width:7px;height:7px;background:#fff;border-radius:3.5px"></div>
<svg class="i" style="left:206px;top:176.8px" width="9" height="9" viewBox="0 0 9 9"><rect x="0.5" y="0.5" width="8" height="8" rx="0.6" fill="#fff" stroke="#666" stroke-width="0.8"/><path d="M2.3 2.6 H6.7 M2.3 4.5 H6.7 M4.5 4.5 V7" stroke="#666" stroke-width="0.7"/></svg>
<svg class="i" style="left:216.8px;top:177.8px" width="7" height="7" viewBox="0 0 7 7"><path d="M0.6 0.8 H2.6 V2.8 H0.6 Z M0.6 4.2 H2.6 V6.2 H0.6 Z M4.4 0.8 L6.2 2.6 M6.2 0.8 L4.4 2.6 M4.2 5.2 H6.4" fill="none" stroke="#7fd09f" stroke-width="0.8"/></svg>
<svg class="i" style="left:10.5px;top:199.2px" width="8" height="8" viewBox="0 0 8 8"><path d="M6.6 5.2 A3 3 0 1 1 6.2 2" fill="none" stroke="#f0b09c" stroke-width="0.8"/><path d="M6.8 0.8 V2.4 H5.2" fill="none" stroke="#f0b09c" stroke-width="0.7"/></svg>
<div class="b" style="left:23px;top:195.6px;width:170px;height:14.6px;border:0.6px solid #efefef;background:#fff;border-radius:1.5px"></div>
<svg class="i" style="left:26.8px;top:200.7px" width="6" height="4" viewBox="0 0 6 4"><path d="M0.5 0.7 L3 3.2 L5.5 0.7" fill="none" stroke="#c4c4c4" stroke-width="0.8"/></svg>
<div class="t" style="left:34.4px;top:198.60px;font-size:7.5px;color:#2a2a2a;font-weight:normal;">* 0.20mm Standard @BBL X1C</div>
<svg class="i" style="left:202.5px;top:199px" width="8" height="9" viewBox="0 0 8 9"><rect x="0.6" y="0.6" width="6.8" height="7.8" rx="1" fill="none" stroke="#555" stroke-width="0.9"/><path d="M2.2 0.6 V3 H5.8 V0.6" fill="none" stroke="#555" stroke-width="0.8"/></svg>
<div class="t" style="left:16.6px;top:218.70px;font-size:7.5px;color:#4a4a4a;font-weight:normal;">Quality</div>
<div class="t" style="left:55.6px;top:218.70px;font-size:7.5px;color:#4a4a4a;font-weight:normal;">Strength</div>
<div class="t" style="left:100px;top:218.70px;font-size:7.5px;color:#4a4a4a;font-weight:normal;">Speed</div>
<div class="t" style="left:137.3px;top:218.70px;font-size:7.5px;color:#ec846c;font-weight:normal;">Support</div>
<div class="t" style="left:180.3px;top:218.70px;font-size:7.5px;color:#222;font-weight:bold;">Others</div>
<div class="b" style="left:178px;top:228.4px;width:28px;height:1.5px;background:#1eab53"></div>
<div class="b" style="left:8px;top:230.2px;width:219px;height:0.6px;background:#ececec"></div>
<svg class="i" style="left:11px;top:237.3px" width="9" height="9" viewBox="0 0 9 9"><rect x="0.6" y="2.2" width="5.8" height="6" rx="0.6" fill="#b5b5b5" stroke="#555" stroke-width="0.8"/><path d="M2.4 2.2 V0.7 H8.2 V6.6 H6.4" fill="none" stroke="#555" stroke-width="0.8"/></svg><div class="t" style="left:23px;top:237.40px;font-size:7.5px;color:#1f1f1f;font-weight:bold;">Bed adhesion</div><div class="b" style="left:75px;top:241.60000000000002px;width:141px;height:0.6px;background:#f4f4f4"></div>
<div class="t" style="left:21px;top:253.60px;font-size:7.8px;color:#3a3a3a;font-weight:normal;">Skirt loops</div><div class="b" style="left:137px;top:250.70000000000002px;width:62.5px;height:13.0px;border:0.6px solid #efefef;background:#fff"></div><svg class="i" style="left:138.7px;top:252.8px" width="6" height="9" viewBox="0 0 6 9"><path d="M0.8 3 L3 1 L5.2 3 M0.8 6 L3 8 L5.2 6" fill="none" stroke="#c8c8c8" stroke-width="0.7"/></svg><div class="t" style="left:147.6px;top:252.80px;font-size:7.5px;color:#2a2a2a;font-weight:normal;">0</div>
<div class="t" style="left:21px;top:268.20px;font-size:7.8px;color:#3a3a3a;font-weight:normal;">Skirt height</div><div class="b" style="left:137px;top:265.4px;width:62.5px;height:13.0px;border:0.6px solid #efefef;background:#f0f0f0"></div><svg class="i" style="left:138.7px;top:267.5px" width="6" height="9" viewBox="0 0 6 9"><path d="M0.8 3 L3 1 L5.2 3 M0.8 6 L3 8 L5.2 6" fill="none" stroke="#c8c8c8" stroke-width="0.7"/></svg><div class="t" style="left:147.6px;top:267.50px;font-size:7.5px;color:#b4b4b4;font-weight:normal;">1</div><div class="t" style="left:168.3px;top:268.20px;font-size:6.5px;color:#b8b8b8;font-weight:normal;width:40px;text-align:center;">layers</div>
<div class="t" style="left:21px;top:282.70px;font-size:7.8px;color:#3a3a3a;font-weight:normal;">Brim type</div><div class="b" style="left:137px;top:280.09999999999997px;width:62.5px;height:13.0px;border:0.6px solid #efefef;background:#fff"></div><svg class="i" style="left:140.2px;top:284.4px" width="6" height="4" viewBox="0 0 6 4"><path d="M0.5 0.7 L3 3.2 L5.5 0.7" fill="none" stroke="#c4c4c4" stroke-width="0.8"/></svg><div class="t" style="left:147.6px;top:282.20px;font-size:7.5px;color:#2a2a2a;font-weight:normal;">Auto</div>
<div class="t" style="left:21px;top:297.40px;font-size:7.8px;color:#3a3a3a;font-weight:normal;">Brim width</div><div class="b" style="left:137px;top:294.79999999999995px;width:62.5px;height:13.0px;border:0.6px solid #efefef;background:#f0f0f0"></div><div class="t" style="left:140.6px;top:296.90px;font-size:7.5px;color:#b4b4b4;font-weight:normal;">5</div><div class="t" style="left:168.3px;top:297.60px;font-size:6.5px;color:#b8b8b8;font-weight:normal;width:40px;text-align:center;">mm</div>
<div class="t" style="left:21px;top:311.90px;font-size:7.8px;color:#3a3a3a;font-weight:normal;">Brim-object gap</div><div class="b" style="left:137px;top:309.4px;width:62.5px;height:13.0px;border:0.6px solid #efefef;background:#fff"></div><div class="t" style="left:140.6px;top:311.50px;font-size:7.5px;color:#2a2a2a;font-weight:normal;">0.1</div><div class="t" style="left:168.3px;top:312.20px;font-size:6.5px;color:#8f8f8f;font-weight:normal;width:40px;text-align:center;">mm</div>
<svg class="i" style="left:11px;top:329.8px" width="9" height="9" viewBox="0 0 9 9"><path d="M0.8 0.8 H8.2 V2.6 H0.8 Z M0.8 6 H8.2 V8.2 H0.8 Z" fill="#fff" stroke="#555" stroke-width="0.8"/><path d="M2 2.6 V3.6 H7 V2.6 M2 6 V4.8 H7 V6" fill="none" stroke="#555" stroke-width="0.8"/></svg><div class="t" style="left:23px;top:329.90px;font-size:7.5px;color:#1f1f1f;font-weight:bold;">Prime tower</div><div class="b" style="left:75px;top:334.1px;width:141px;height:0.6px;background:#f4f4f4"></div>
<div class="t" style="left:21px;top:345.90px;font-size:7.8px;color:#3a3a3a;font-weight:normal;">Enable</div><svg class="i" style="left:137px;top:346px" width="9" height="9" viewBox="0 0 9 9"><rect x="0.2" y="0.2" width="8.6" height="8.6" rx="0.8" fill="#1fae54"/><path d="M2 4.4 L3.9 6.3 L7 2.7" fill="none" stroke="#fff" stroke-width="1"/></svg>
<div class="t" style="left:21px;top:360.60px;font-size:7.8px;color:#3a3a3a;font-weight:normal;">Width</div><div class="b" style="left:137px;top:358.2px;width:62.5px;height:13.0px;border:0.6px solid #efefef;background:#fff"></div><div class="t" style="left:140.6px;top:360.30px;font-size:7.5px;color:#2a2a2a;font-weight:normal;">35</div><div class="t" style="left:168.3px;top:361.00px;font-size:6.5px;color:#8f8f8f;font-weight:normal;width:40px;text-align:center;">mm</div>
<div class="t" style="left:21px;top:375.40px;font-size:7.8px;color:#3a3a3a;font-weight:normal;">Prime volume</div><div class="b" style="left:137px;top:372.79999999999995px;width:62.5px;height:13.0px;border:0.6px solid #efefef;background:#fff"></div><div class="t" style="left:140.6px;top:374.90px;font-size:7.5px;color:#2a2a2a;font-weight:normal;">45</div><div class="t" style="left:168.3px;top:375.60px;font-size:6.5px;color:#8f8f8f;font-weight:normal;width:40px;text-align:center;">mm³</div>
<div class="t" style="left:21px;top:389.90px;font-size:7.8px;color:#3a3a3a;font-weight:normal;">Brim width</div><div class="b" style="left:137px;top:387.4px;width:62.5px;height:13.0px;border:0.6px solid #efefef;background:#fff"></div><div class="t" style="left:140.6px;top:389.50px;font-size:7.5px;color:#2a2a2a;font-weight:normal;">3</div><div class="t" style="left:168.3px;top:390.20px;font-size:6.5px;color:#8f8f8f;font-weight:normal;width:40px;text-align:center;">mm</div>
<svg class="i" style="left:11px;top:407.3px" width="9" height="9" viewBox="0 0 9 9"><path d="M3.6 0.6 H5.4 V3 H7.6 V5 H1.4 V3 H3.6 Z" fill="#fff" stroke="#555" stroke-width="0.8"/><path d="M1.4 5 V8.3 H7.6 V5 M3.4 6.4 V8.3 M5.6 6.4 V8.3" fill="none" stroke="#555" stroke-width="0.8"/></svg><div class="t" style="left:23px;top:407.60px;font-size:7.5px;color:#1f1f1f;font-weight:bold;">Flush options</div><div class="b" style="left:75px;top:411.8px;width:141px;height:0.6px;background:#f4f4f4"></div>
<div class="t" style="left:21px;top:423.60px;font-size:7.8px;color:#3a3a3a;font-weight:normal;">Flush into objects' infill</div><svg class="i" style="left:137px;top:423.6px" width="9" height="9" viewBox="0 0 9 9"><rect x="0.5" y="0.5" width="8" height="8" rx="0.8" fill="#fff" stroke="#c9c9c9" stroke-width="0.8"/></svg>
<div class="t" style="left:21px;top:438.40px;font-size:7.8px;color:#3a3a3a;font-weight:normal;">Flush into objects' support</div><svg class="i" style="left:137px;top:438.2px" width="9" height="9" viewBox="0 0 9 9"><rect x="0.2" y="0.2" width="8.6" height="8.6" rx="0.8" fill="#1fae54"/><path d="M2 4.4 L3.9 6.3 L7 2.7" fill="none" stroke="#fff" stroke-width="1"/></svg>
<svg class="i" style="left:11px;top:455.6px" width="9" height="9" viewBox="0 0 9 9"><rect x="0.6" y="0.7" width="7.8" height="3" fill="#fff" stroke="#555" stroke-width="0.8"/><path d="M0.6 5.4 H3.6 M0.6 7 H3.6 M0.6 8.5 H3.6" stroke="#555" stroke-width="0.8"/><rect x="5" y="5.2" width="3.4" height="3.2" fill="#999" stroke="#555" stroke-width="0.7"/></svg><div class="t" style="left:23px;top:455.80px;font-size:7.5px;color:#1f1f1f;font-weight:bold;">Special mode</div><div class="b" style="left:75px;top:460.0px;width:141px;height:0.6px;background:#f4f4f4"></div>
<div class="t" style="left:21px;top:471.80px;font-size:7.8px;color:#3a3a3a;font-weight:normal;">Slicing Mode</div><div class="b" style="left:137px;top:469.2px;width:62.5px;height:13.0px;border:0.6px solid #efefef;background:#fff"></div><svg class="i" style="left:140.2px;top:473.5px" width="6" height="4" viewBox="0 0 6 4"><path d="M0.5 0.7 L3 3.2 L5.5 0.7" fill="none" stroke="#c4c4c4" stroke-width="0.8"/></svg><div class="t" style="left:147.6px;top:471.30px;font-size:7.5px;color:#2a2a2a;font-weight:normal;">Regular</div>
<div class="t" style="left:21px;top:486.80px;font-size:7.8px;color:#3a3a3a;font-weight:normal;">Print sequence</div><div class="b" style="left:137px;top:484.0px;width:62.5px;height:13.0px;border:0.6px solid #efefef;background:#fff"></div><svg class="i" style="left:140.2px;top:488.3px" width="6" height="4" viewBox="0 0 6 4"><path d="M0.5 0.7 L3 3.2 L5.5 0.7" fill="none" stroke="#c4c4c4" stroke-width="0.8"/></svg><div class="t" style="left:147.6px;top:486.10px;font-size:7.5px;color:#2a2a2a;font-weight:normal;">By layer</div>
<div class="t" style="left:21px;top:501.40px;font-size:7.8px;color:#3a3a3a;font-weight:normal;">Spiral vase</div><svg class="i" style="left:137px;top:501.2px" width="9" height="9" viewBox="0 0 9 9"><rect x="0.5" y="0.5" width="8" height="8" rx="0.8" fill="#fff" stroke="#c9c9c9" stroke-width="0.8"/></svg>
<div class="t" style="left:21px;top:516.20px;font-size:7.8px;color:#3a3a3a;font-weight:normal;">Timelapse</div><div class="b" style="left:137px;top:513.4px;width:62.5px;height:13.0px;border:0.6px solid #efefef;background:#fff"></div><svg class="i" style="left:140.2px;top:517.7px" width="6" height="4" viewBox="0 0 6 4"><path d="M0.5 0.7 L3 3.2 L5.5 0.7" fill="none" stroke="#c4c4c4" stroke-width="0.8"/></svg><div class="t" style="left:147.6px;top:515.50px;font-size:7.5px;color:#2a2a2a;font-weight:normal;">Traditional</div>
<div class="t" style="left:21px;top:530.80px;font-size:7.8px;color:#3a3a3a;font-weight:normal;">Fuzzy Skin</div><div class="b" style="left:137px;top:528.1999999999999px;width:62.5px;height:13.0px;border:0.6px solid #efefef;background:#fff"></div><svg class="i" style="left:140.2px;top:532.5px" width="6" height="4" viewBox="0 0 6 4"><path d="M0.5 0.7 L3 3.2 L5.5 0.7" fill="none" stroke="#c4c4c4" stroke-width="0.8"/></svg><div class="t" style="left:147.6px;top:530.30px;font-size:7.5px;color:#2a2a2a;font-weight:normal;">None</div>
<svg class="i" style="left:11px;top:547.8px" width="9" height="9" viewBox="0 0 9 9"><circle cx="3.6" cy="3.8" r="2.6" fill="none" stroke="#9a9a9a" stroke-width="0.8"/><circle cx="3.6" cy="3.8" r="0.9" fill="#9a9a9a"/><circle cx="6.6" cy="6.6" r="1.7" fill="#fff" stroke="#9a9a9a" stroke-width="0.7"/></svg><div class="t" style="left:23px;top:548.00px;font-size:7.5px;color:#1f1f1f;font-weight:bold;">Advanced</div><div class="b" style="left:75px;top:552.1999999999999px;width:141px;height:0.6px;background:#f4f4f4"></div>
<div class="b" style="left:222.8px;top:235.3px;width:4px;height:156px;background:#7b7b7b;border-radius:2px"></div>
<div class="b" style="left:8px;top:8px;width:1007.5px;height:14px;background:#2b2a2f"></div>
<div class="b" style="left:8px;top:22px;width:1007.5px;height:19.3px;background:#3b4346"></div>
<div class="b" style="left:12.399999999999999px;top:12.2px;width:6.4px;height:6.4px;background:#5a5a5f;border-radius:50%"></div>
<div class="b" style="left:22.7px;top:12.2px;width:6.4px;height:6.4px;background:#8b8b90;border-radius:50%"></div>
<div class="b" style="left:32.8px;top:12.2px;width:6.4px;height:6.4px;background:#8b8b90;border-radius:50%"></div>
<div class="t" style="left:462px;top:10.00px;font-size:7.6px;color:#fff;font-weight:bold;width:100px;text-align:center;letter-spacing:0px;">Untitled</div>
<svg class="i" style="left:13.2px;top:26.6px" width="11" height="11" viewBox="0 0 11 11"><path d="M5.5 0.6 L10.6 5.4 H9.2 V10.4 H6.7 V7 H4.3 V10.4 H1.8 V5.4 H0.4 Z" fill="#fff"/></svg>
<div class="b" style="left:29px;top:22px;width:69.4px;height:19.3px;background:#0eab4b"></div>
<svg class="i" style="left:43.6px;top:27.2px" width="10" height="10" viewBox="0 0 10 10"><path d="M5 1 L9 3 V7 L5 9 L1 7 V3 Z M1.2 3.1 L5 5 L8.8 3.1" fill="none" stroke="#bff0d0" stroke-width="0.9" stroke-linejoin="round"/></svg>
<div class="t" style="left:58px;top:26.90px;font-size:7.65px;color:#fff;font-weight:normal;-webkit-text-stroke:0.35px #fff;">Prepare</div>
<svg class="i" style="left:112px;top:27.2px" width="10" height="10" viewBox="0 0 10 10"><path d="M5 1 L9 2.8 L5 4.6 L1 2.8 Z M1 4.6 L5 6.4 L9 4.6 M1 6.6 L5 8.4 L9 6.6 M1 2.8 V7 M9 2.8 V7" fill="none" stroke="#d8dcdc" stroke-width="0.8" stroke-linejoin="round"/></svg>
<div class="t" style="left:127.4px;top:26.90px;font-size:7.65px;color:#fff;font-weight:normal;-webkit-text-stroke:0.35px #fff;">Preview</div>
<svg class="i" style="left:183.5px;top:27.2px" width="10" height="10" viewBox="0 0 10 10"><rect x="0.8" y="0.8" width="3.6" height="2.6" fill="none" stroke="#e2e4e4" stroke-width="0.8"/><rect x="5.8" y="5.6" width="3.2" height="3.4" fill="none" stroke="#e2e4e4" stroke-width="0.8"/><path d="M6.5 1 H9 V3.2 M3.4 9 H1 V6.4 M2.6 3.4 V5" fill="none" stroke="#e2e4e4" stroke-width="0.8"/></svg>
<div class="t" style="left:198.3px;top:26.90px;font-size:7.65px;color:#fff;font-weight:normal;-webkit-text-stroke:0.35px #fff;">Device</div>
<svg class="i" style="left:252.5px;top:27.2px" width="10" height="10" viewBox="0 0 10 10"><rect x="0.8" y="1" width="8.4" height="8" fill="none" stroke="#e2e4e4" stroke-width="0.8"/><path d="M3.6 1 V9 M6.4 1 V9 M6.4 3.6 H9.2 M6.4 6.2 H9.2" stroke="#e2e4e4" stroke-width="0.7" fill="none"/></svg>
<div class="t" style="left:267.1px;top:26.90px;font-size:7.65px;color:#fff;font-weight:normal;-webkit-text-stroke:0.35px #fff;">Project</div>
<svg class="i" style="left:315.5px;top:27.6px" width="9" height="9" viewBox="0 0 9 9"><circle cx="4.5" cy="4.5" r="3.6" fill="none" stroke="#c9cccc" stroke-width="0.9"/><circle cx="4.5" cy="4.5" r="1.7" fill="#e8e8e8"/></svg>
<div class="t" style="left:330.5px;top:26.90px;font-size:7.65px;color:#fff;font-weight:normal;-webkit-text-stroke:0.35px #fff;">Calibration</div>
<div class="b" style="left:777.5px;top:25.6px;width:66.3px;height:12.6px;background:#0eab4b;border-radius:6.3px"></div>
<svg class="i" style="left:793.5px;top:27.8px" width="8" height="8" viewBox="0 0 8 8"><path d="M4 0.8 V6 M2.4 2.4 L4 0.8 L5.6 2.4 M1 4.6 Q1 7.2 4 7.2 Q7 7.2 7 4.6" fill="none" stroke="#fff" stroke-width="0.9"/></svg>
<div class="t" style="left:803.8px;top:26.90px;font-size:7.6px;color:#fff;font-weight:normal;-webkit-text-stroke:0.3px #fff;">Upload</div>
<div class="b" style="left:850.8px;top:25.6px;width:69px;height:12.6px;background:#0eab4b;border-radius:6.3px"></div>
<div class="b" style="left:864.2px;top:25.6px;width:0.7px;height:12.6px;background:#3f8f5c"></div>
<svg class="i" style="left:855px;top:30.2px" width="5" height="4" viewBox="0 0 5 4"><path d="M0.6 0.8 L2.5 2.8 L4.4 0.8" fill="none" stroke="#d4f5e0" stroke-width="0.8"/></svg>
<div class="t" style="left:872.5px;top:26.90px;font-size:7.6px;color:#fff;font-weight:normal;-webkit-text-stroke:0.3px #fff;">Slice plate</div>
<div class="b" style="left:927.6px;top:25.6px;width:68.2px;height:12.6px;background:#6e7273;border-radius:6.3px"></div>
<div class="b" style="left:927.6px;top:25.6px;width:13.6px;height:12.6px;background:#0eab4b;border-radius:6.3px 0 0 6.3px"></div>
<svg class="i" style="left:932px;top:30.2px" width="5" height="4" viewBox="0 0 5 4"><path d="M0.6 0.8 L2.5 2.8 L4.4 0.8" fill="none" stroke="#d4f5e0" stroke-width="0.8"/></svg>
<div class="t" style="left:949.6px;top:26.90px;font-size:7.6px;color:#a4a8a8;font-weight:normal;">Print plate</div>
<div class="b" style="left:814px;top:533px;width:196.5px;height:23.4px;background:#fff;border:0.6px solid #74b890;border-radius:2px;box-sizing:border-box"></div>
<div class="b" style="left:814px;top:533px;width:4.2px;height:23.4px;background:#1aa64d;border-radius:2px 0 0 2px"></div>
<div class="t" style="left:821.8px;top:540.90px;font-size:7.05px;color:#3a3a3a;font-weight:normal;">Configuration can update now. <span style="color:#1aa64d;text-decoration:underline">Detail.</span></div>
<div class="b" style="left:993.3px;top:539.4px;width:11.4px;height:11.4px;background:#f6f3f5;border-radius:50%"></div>
<svg class="i" style="left:995.4px;top:541.5px" width="7.2" height="7.2" viewBox="0 0 7.2 7.2"><path d="M1 1 L6.2 6.2 M6.2 1 L1 6.2" stroke="#8a8a8a" stroke-width="0.8"/></svg>
</div></div>
<svg class="i" style="left:0;top:0;z-index:50" width="1024" height="570" viewBox="0 0 1024 570"><rect x="5" y="321.6" width="211.2" height="83.6" fill="none" stroke="#d8414f" stroke-width="1.6"/><circle cx="215.5" cy="209" r="11.5" fill="#ef2f43"/><text x="215.5" y="214.98" text-anchor="middle" font-family="Liberation Sans, sans-serif" font-weight="bold" font-size="16.6" fill="#fff">1</text><circle cx="198" cy="340" r="11.5" fill="#ef2f43"/><text x="198" y="345.98" text-anchor="middle" font-family="Liberation Sans, sans-serif" font-weight="bold" font-size="16.6" fill="#fff">2</text></svg>
</body></html>
